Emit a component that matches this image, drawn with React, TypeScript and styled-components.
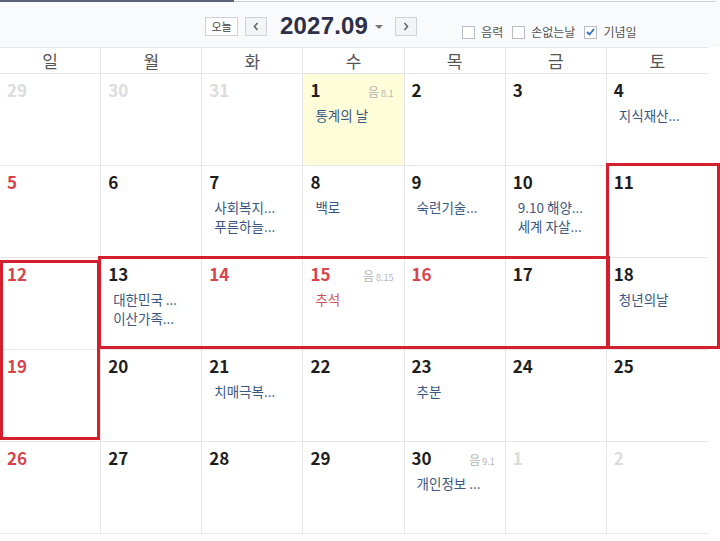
import React from 'react';
import styled, { createGlobalStyle } from 'styled-components';

const GlobalStyle = createGlobalStyle`
  html, body { margin: 0; padding: 0; background: #ffffff; }
  body { font-family: "Noto Sans CJK KR", "Noto Sans", sans-serif; }
`;

const Page = styled.div`
  position: relative;
  width: 720px;
  height: 541px;
  overflow: hidden;
  background: #ffffff;
`;

const TopStrip = styled.div`
  display: flex;
  height: 3px;
  background: #f9fafb;
`;

const DarkSeg = styled.div`
  width: 234px;
  height: 2px;
  background: #5a6174;
`;

const LightSeg = styled.div`
  width: 482px;
  height: 1px;
  margin-top: 1px;
  background: #cdd0d6;
`;

const Toolbar = styled.div`
  height: 44px;
  box-sizing: border-box;
  background: #f9fafb;
  display: flex;
  align-items: flex-start;
  padding: 14px 0 0 205px;
`;

const TodayButton = styled.button`
  width: 33px;
  height: 19px;
  box-sizing: border-box;
  border: 1px solid #cfd2d7;
  background: #ffffff;
  color: #444;
  font-family: "Noto Sans CJK KR", sans-serif;
  font-size: 11px;
  line-height: 15px;
  padding: 0;
  margin: 0;
`;

const NavButton = styled.button<{ $gap: number }>`
  width: 22px;
  height: 19px;
  box-sizing: border-box;
  border: 1px solid #cfd2d7;
  background: #f3f4f6;
  padding: 0;
  margin: 0 0 0 ${(p) => p.$gap}px;
  display: flex;
  align-items: center;
  justify-content: center;
`;

const Title = styled.div`
  margin-left: 13px;
  margin-top: -3px;
  font-family: "Liberation Sans", Arial, sans-serif;
  font-weight: 700;
  font-size: 24px;
  line-height: 24px;
  color: #2d3047;
  letter-spacing: 0.2px;
`;

const Caret = styled.div`
  margin: 8px 0 0 7px;
  width: 0;
  height: 0;
  border-left: 4px solid transparent;
  border-right: 4px solid transparent;
  border-top: 4px solid #777;
`;

const Options = styled.div`
  display: flex;
  align-items: center;
  gap: 9px;
  margin: 8px 0 0 45px;
`;

const Option = styled.label`
  display: flex;
  align-items: center;
  gap: 6px;
  font-size: 12px;
  line-height: 14px;
  color: #555;
`;

const Box = styled.span`
  width: 13px;
  height: 13px;
  box-sizing: border-box;
  border: 1px solid #b9bdc3;
  background: #fff;
  display: flex;
  align-items: center;
  justify-content: center;
`;

const Calendar = styled.div`
  width: 708px;
`;

const HeaderRow = styled.div`
  display: grid;
  grid-template-columns: repeat(7, 1fr);
  border-top: 1px solid #e4e5e7;
  border-bottom: 1px solid #e4e5e7;
  height: 27px;
  box-sizing: border-box;
`;

const HeaderCell = styled.div<{ $last: boolean }>`
  border-right: ${(p) => (p.$last ? 'none' : '1px solid #e6e6e6')};
  text-align: center;
  font-size: 17px;
  line-height: 25px;
  color: #555;
`;

const Week = styled.div`
  display: grid;
  grid-template-columns: repeat(7, 1fr);
  height: 92px;
  box-sizing: border-box;
  border-bottom: 1px solid #e6e6e6;
`;

const Cell = styled.div<{ $last: boolean; $today: boolean }>`
  border-right: ${(p) => (p.$last ? 'none' : '1px solid #e6e6e6')};
  background: ${(p) => (p.$today ? '#fdfdd9' : '#ffffff')};
  padding: 6px 10px 0 7px;
  box-sizing: border-box;
  min-width: 0;
`;

const CellHead = styled.div`
  display: flex;
  justify-content: space-between;
  align-items: baseline;
`;

const DayNum = styled.span<{ $tone: 'normal' | 'red' | 'other' }>`
  font-size: 17px;
  font-weight: 700;
  line-height: 20px;
  color: ${(p) => (p.$tone === 'red' ? '#d6444e' : p.$tone === 'other' ? '#dcdcdc' : '#1e1e1e')};
`;

const Lunar = styled.span`
  font-size: 12px;
  color: #b3b3b3;
  & > small {
    font-size: 9px;
    margin-left: 2px;
  }
`;

const Events = styled.div`
  margin-top: 6px;
  padding-left: 5px;
`;

const EventLine = styled.div<{ $holiday: boolean }>`
  font-size: 13.5px;
  line-height: 19px;
  color: ${(p) => (p.$holiday ? '#d0545d' : '#3b5780')};
  white-space: nowrap;
`;

const Mark = styled.div<{ $x: number; $y: number; $w: number; $h: number }>`
  position: absolute;
  left: ${(p) => p.$x}px;
  top: ${(p) => p.$y}px;
  width: ${(p) => p.$w}px;
  height: ${(p) => p.$h}px;
  box-sizing: border-box;
  border: 3px solid #d31f2e;
  pointer-events: none;
`;

type Day = {
  d: number;
  tone?: 'normal' | 'red' | 'other';
  today?: boolean;
  lunar?: string;
  events?: string[];
  holiday?: boolean;
};

const weeks: Day[][] = [
  [
    { d: 29, tone: 'other' },
    { d: 30, tone: 'other' },
    { d: 31, tone: 'other' },
    { d: 1, today: true, lunar: '8.1', events: ['통계의 날'] },
    { d: 2 },
    { d: 3 },
    { d: 4, events: ['지식재산...'] },
  ],
  [
    { d: 5, tone: 'red' },
    { d: 6 },
    { d: 7, events: ['사회복지...', '푸른하늘...'] },
    { d: 8, events: ['백로'] },
    { d: 9, events: ['숙련기술...'] },
    { d: 10, events: ['9.10 해양...', '세계 자살...'] },
    { d: 11 },
  ],
  [
    { d: 12, tone: 'red' },
    { d: 13, events: ['대한민국 ...', '이산가족...'] },
    { d: 14, tone: 'red' },
    { d: 15, tone: 'red', lunar: '8.15', events: ['추석'], holiday: true },
    { d: 16, tone: 'red' },
    { d: 17 },
    { d: 18, events: ['청년의날'] },
  ],
  [
    { d: 19, tone: 'red' },
    { d: 20 },
    { d: 21, events: ['치매극복...'] },
    { d: 22 },
    { d: 23, events: ['추분'] },
    { d: 24 },
    { d: 25 },
  ],
  [
    { d: 26, tone: 'red' },
    { d: 27 },
    { d: 28 },
    { d: 29 },
    { d: 30, lunar: '9.1', events: ['개인정보 ...'] },
    { d: 1, tone: 'other' },
    { d: 2, tone: 'other' },
  ],
];

const dayNames = ['일', '월', '화', '수', '목', '금', '토'];

const Chevron = ({ dir }: { dir: 'left' | 'right' }) => (
  <svg width="6" height="9" viewBox="0 0 6 9">
    <polyline
      points={dir === 'left' ? '4.5,1 1.5,4.5 4.5,8' : '1.5,1 4.5,4.5 1.5,8'}
      fill="none"
      stroke="#666"
      strokeWidth="1.6"
    />
  </svg>
);

const Check = () => (
  <svg width="9" height="8" viewBox="0 0 9 8">
    <polyline points="1,4 3.5,6.5 8,1" fill="none" stroke="#2f6fc4" strokeWidth="1.8" />
  </svg>
);

export default function App() {
  return (
    <Page>
      <GlobalStyle />
      <TopStrip>
        <DarkSeg />
        <LightSeg />
      </TopStrip>
      <Toolbar>
        <TodayButton>오늘</TodayButton>
        <NavButton $gap={7}>
          <Chevron dir="left" />
        </NavButton>
        <Title>2027.09</Title>
        <Caret />
        <NavButton $gap={12}>
          <Chevron dir="right" />
        </NavButton>
        <Options>
          <Option>
            <Box />
            음력
          </Option>
          <Option>
            <Box />
            손없는날
          </Option>
          <Option>
            <Box>
              <Check />
            </Box>
            기념일
          </Option>
        </Options>
      </Toolbar>
      <Calendar>
        <HeaderRow>
          {dayNames.map((n, i) => (
            <HeaderCell key={n} $last={i === 6}>
              {n}
            </HeaderCell>
          ))}
        </HeaderRow>
        {weeks.map((w, wi) => (
          <Week key={wi}>
            {w.map((day, di) => (
              <Cell key={di} $last={di === 6} $today={!!day.today}>
                <CellHead>
                  <DayNum $tone={day.tone ?? 'normal'}>{day.d}</DayNum>
                  {day.lunar && (
                    <Lunar>
                      음<small>{day.lunar}</small>
                    </Lunar>
                  )}
                </CellHead>
                {day.events && (
                  <Events>
                    {day.events.map((e) => (
                      <EventLine key={e} $holiday={!!day.holiday}>
                        {e}
                      </EventLine>
                    ))}
                  </Events>
                )}
              </Cell>
            ))}
          </Week>
        ))}
      </Calendar>
      <Mark $x={606} $y={163} $w={114} $h={186} />
      <Mark $x={98} $y={256} $w={512} $h={93} />
      <Mark $x={0} $y={260} $w={100} $h={180} />
    </Page>
  );
}
